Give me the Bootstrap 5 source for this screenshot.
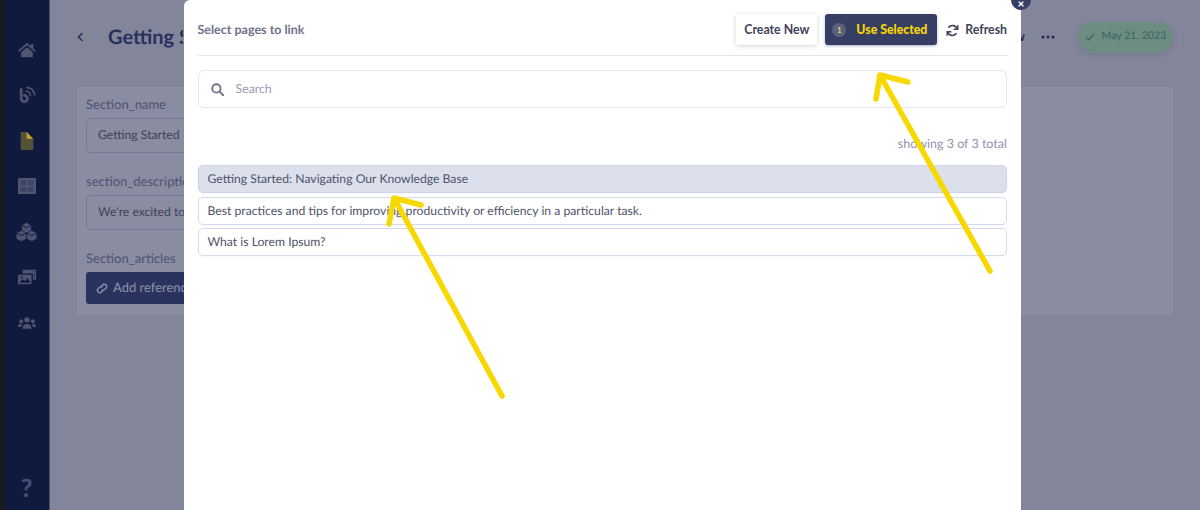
<!DOCTYPE html>
<html lang="en">
<head>
<meta charset="utf-8">
<title>Select pages to link</title>
<link href="https://cdn.jsdelivr.net/npm/bootstrap@5.3.0/dist/css/bootstrap.min.css" rel="stylesheet">
<style>
html,body{height:510px;overflow:hidden}
body{font-family:"Lato","Liberation Sans",sans-serif;background:#83869a;color:#3f4258;position:relative;text-rendering:geometricPrecision}
.app-shell{height:510px;border-left:4px solid #1b1b1b}
.side-rail{width:46px;background:#101a3e;padding-top:27px;border-right:1px solid #4a5274}
.rail-item{height:45.5px;width:100%}
.rail-item svg{width:18px;height:18px}
.rail-item svg.rail-cubes{width:21px;height:21px}
.rail-help{color:#454d70;font-weight:900;font-size:25px;line-height:1;margin-bottom:9px}
.page-area{min-width:0;padding:0 27px}
.page-top{height:87px;padding-bottom:13px}
.back-mark{color:#27305d;margin-right:24px}
.title-clip{width:75px;overflow:hidden}
.page-title{font-size:20px;font-weight:700;color:#27305d;margin:0;white-space:nowrap}
.tail-clip{width:7px;overflow:hidden;margin-left:auto;justify-content:flex-end}
.page-tail{font-size:13px;font-weight:700;color:#20264a;white-space:nowrap}
.date-pill{background:#6d8c82;color:#3f625f;border-radius:16px;height:31px;width:95px;font-size:10.6px;margin-left:23px;box-shadow:0 2px 5px rgba(60,70,100,.2)}
.form-panel{background:#8a8da2;height:228px;padding:9px;font-size:13px}
.form-clip{width:98px;overflow:hidden}
.field-label{color:#4c5273;margin-bottom:6px;line-height:16px;white-space:nowrap}
.field-box{height:35px;width:300px;border:1px solid #73779a;border-radius:5px;padding:0 11px;color:#3c4058;margin-bottom:20px;font-size:12.2px;white-space:nowrap}
.ref-btn{background:#2a3360;color:#8e93ab;height:32px;width:300px;border-radius:3px;padding-left:9px;font-size:13px;white-space:nowrap}
.dialog-sheet{position:absolute;left:184px;top:0;width:837px;height:510px;background:#fff;border-radius:6px 6px 0 0;padding:14px 14px 0 13.5px}
.close-dot{position:absolute;right:-10px;top:-10px;width:20px;height:20px;border-radius:50%;background:#373e63;color:#fff;font-size:12px;font-weight:900;line-height:1}
.dialog-title{font-size:12.5px;font-weight:700;color:#6f7289;padding-top:1px}
.dialog-head{height:42px;padding-bottom:10px;border-bottom:1px solid #e4e6ef}
.act-btn{height:31px;border-radius:3px;font-size:12.3px;font-weight:700;border:0;padding:1px 0 0}
.act-new{width:81px;background:#fff;color:#3f4258;box-shadow:0 1px 5px rgba(60,70,110,.22);margin-right:8px}
.act-use{width:112px;background:#373e63;color:#f7d800;box-shadow:0 1px 3px rgba(60,70,110,.4);font-weight:900;margin-right:9px;padding-left:7px}
.count-dot{width:14px;height:14px;border-radius:50%;background:#5a607f;color:#e4d65a;font-size:8px;margin-right:10px;font-weight:700}
.act-refresh{color:#3f4258;background:transparent}
.act-refresh svg{margin-right:6px}
.search-bar{height:38px;border:1.5px solid #e3e5f0;border-radius:6px;margin-top:14px;padding-left:12px;font-size:12.3px;color:#999caf}
.search-bar svg{margin-right:12px}
.count-line{font-size:12.5px;color:#8f93ab;text-align:right;margin-top:28px;margin-bottom:13px;line-height:16px}
.page-list{gap:3.5px}
.page-row{height:28px;border:1.5px solid #d5daf0;border-radius:5px;padding:1px 0 0 9px;font-size:12.2px;color:#50536a;box-shadow:0 1px 2px rgba(80,90,140,.05)}
.page-row.is-picked{background:#dce0ec;border-color:#ced4e8}
.arrow-layer{position:absolute;left:0;top:0;pointer-events:none}
</style>
</head>
<body>
<div class="app-shell d-flex">
  <nav class="side-rail d-flex flex-column align-items-center flex-shrink-0">
    <div class="rail-item d-flex align-items-center justify-content-center"><svg viewBox="0 0 20 20" fill="#4d5573"><path d="M10 2 0 10.800l1.300 1.400L10 4.800l8.700 7.400 1.300-1.400-3-2.600V3.500h-2.700v2.400z"/><path d="M3.500 12.500 10 7l6.500 5.500V18H3.500z"/></svg></div>
    <div class="rail-item d-flex align-items-center justify-content-center"><svg viewBox="0 0 20 20" fill="none" stroke="#4d5573"><path d="M3.500 3.500v10.500a3.500 3.500 0 1 0 3.500-3.500" stroke-width="3" stroke-linecap="round"/><path d="M8.500 5.500c3.200.3 5.200 2.300 5.500 5.500" stroke-width="1.800"/><path d="M9.500 1.500c5 .4 8.500 3.800 9 9" stroke-width="1.800"/></svg></div>
    <div class="rail-item d-flex align-items-center justify-content-center"><svg viewBox="0 0 20 20"><path d="M3 0h7l7 8v12H3z" fill="#55523a"/><path d="M9.500 0l7.500 7.500H9.500z" fill="#b9a52c"/></svg></div>
    <div class="rail-item d-flex align-items-center justify-content-center"><svg viewBox="0 0 20 20"><rect y="1" width="20" height="18" rx="1" fill="#4d5573"/><path d="M3 3.500h6v5H3zM11 3.500h6v5h-6zM3 11h6v5.500H3zM11 11h6v5.500h-6z" fill="#3d4463"/></svg></div>
    <div class="rail-item d-flex align-items-center justify-content-center"><svg class="rail-cubes" viewBox="0 0 20 20" fill="#4d5573" stroke="#101a3e" stroke-width=".5"><path d="M5.500 4 10 1.500 14.500 4v5.500L10 12 5.500 9.500z"/><path d="M.2 11.500 5 9l4.800 2.500v5.500L5 19.500.2 17z"/><path d="M10.200 11.500 15 9l4.800 2.500v5.500L15 19.500 10.200 17z"/><path d="M5.500 4 10 6.500 14.500 4M.2 11.500 5 14l4.800-2.500M10.200 11.500 15 14l4.800-2.500" fill="none" stroke-width=".9"/></svg></div>
    <div class="rail-item d-flex align-items-center justify-content-center"><svg viewBox="0 0 20 20" fill="#4d5573"><path d="M5 2h15v11h-3.500V6H5z"/><circle cx="18" cy="4" r=".8" fill="#101a3e"/><circle cx="18" cy="7" r=".8" fill="#101a3e"/><circle cx="18" cy="10" r=".8" fill="#101a3e"/><path d="M0 7.500h15V18H0z"/><path d="M1.500 16.500l3.500-4 2.500 2 3-3 3.500 5z" fill="#101a3e"/><circle cx="4" cy="10.300" r="1.200" fill="#101a3e"/></svg></div>
    <div class="rail-item d-flex align-items-center justify-content-center"><svg viewBox="0 0 20 20" fill="#4d5573"><circle cx="10" cy="6.500" r="3"/><circle cx="3.500" cy="8" r="2.200"/><circle cx="16.500" cy="8" r="2.200"/><path d="M5 16.500c0-3.500 1.500-5.500 5-5.500s5 2 5 5.500z"/><path d="M0 14.500c0-2.500 1-3.800 3.500-3.800.4 0 .7 0 1 .1-.5 1-.8 2.200-.8 3.700zM20 14.500c0-2.500-1-3.800-3.500-3.800-.4 0-.7 0-1 .1.500 1 .8 2.200.8 3.700z"/></svg></div>
    <div class="rail-help mt-auto">?</div>
  </nav>
  <main class="page-area flex-grow-1 d-flex flex-column">
    <header class="page-top d-flex align-items-center">
      <svg class="back-mark" width="7" height="10" viewBox="0 0 7 10" fill="none" stroke="currentColor" stroke-width="1.600"><path d="M5.500 1 1.500 5l4 4"/></svg>
      <div class="title-clip"><h1 class="page-title">Getting Started</h1></div>
      <div class="tail-clip d-flex"><span class="page-tail">Preview</span></div>
      <svg class="ms-3" width="14" height="4" viewBox="0 0 14 4" fill="#20264a"><circle cx="2" cy="2" r="1.500"/><circle cx="7" cy="2" r="1.500"/><circle cx="12" cy="2" r="1.500"/></svg>
      <span class="date-pill d-inline-flex align-items-center justify-content-center gap-1"><svg width="10" height="8" viewBox="0 0 10 8" fill="none" stroke="currentColor" stroke-width="1.200"><path d="M1 4.200 3.600 7 9 1"/></svg>&nbsp;May 21, 2023</span>
    </header>
    <section class="form-panel">
      <div class="form-clip">
        <div class="field-label">Section_name</div>
        <div class="field-box d-flex align-items-center">Getting Started</div>
        <div class="field-label">section_description</div>
        <div class="field-box d-flex align-items-center">We're excited to</div>
        <div class="field-label">Section_articles</div>
        <div class="ref-btn d-flex align-items-center gap-1">
          <svg width="14" height="13" viewBox="0 0 16 16" fill="none" stroke="currentColor" stroke-width="1.700"><path d="M7 5.500 9.500 3a3 3 0 0 1 4 4l-2.500 2.500a3 3 0 0 1-3.500 0M9 10.500 6.500 13a3 3 0 0 1-4-4L5 6.500a3 3 0 0 1 3.500 0"/></svg>
          Add reference
        </div>
      </div>
    </section>
  </main>
</div>

<div class="dialog-sheet" role="dialog" aria-label="Select pages to link">
  <div class="close-dot d-flex align-items-end justify-content-center"><span>×</span></div>
  <div class="dialog-head d-flex align-items-center">
    <span class="dialog-title">Select pages to link</span>
    <button class="act-btn act-new ms-auto" type="button">Create New</button>
    <button class="act-btn act-use d-inline-flex align-items-center" type="button"><span class="count-dot d-inline-flex align-items-center justify-content-center">1</span>Use Selected</button>
    <button class="act-btn act-refresh d-inline-flex align-items-center" type="button">
      <svg width="13" height="13" viewBox="0 0 16 16" fill="none" stroke="#3f4258" stroke-width="2"><path d="M14 6.500A6.200 6.200 0 0 0 3 4.500M2 9.500a6.200 6.200 0 0 0 11 2"/><path d="M14.500 1.500v5h-5M1.500 14.500v-5h5" stroke-width="1.800"/></svg>Refresh
    </button>
  </div>
  <div class="search-bar d-flex align-items-center">
    <svg width="13" height="13" viewBox="0 0 14 14" fill="none" stroke="#6f7289" stroke-width="2"><circle cx="5.800" cy="5.800" r="4.500"/><path d="m9.200 9.200 4 4" stroke-linecap="round"/></svg>
    Search
  </div>
  <div class="count-line">showing 3 of 3 total</div>
  <div class="page-list d-flex flex-column">
    <div class="page-row is-picked d-flex align-items-center">Getting Started: Navigating Our Knowledge Base</div>
    <div class="page-row d-flex align-items-center">Best practices and tips for improving productivity or efficiency in a particular task.</div>
    <div class="page-row d-flex align-items-center">What is Lorem Ipsum?</div>
  </div>
</div>

<svg class="arrow-layer" width="1200" height="510" viewBox="0 0 1200 510" fill="none" stroke="#f7d800" stroke-width="5.500" stroke-linecap="round" stroke-linejoin="round" aria-hidden="true">
  <path d="M990 271 880 75M876 99l4-24 28 7"/>
  <path d="M502 396 394 198M389 224l5-26 27 7"/>
</svg>
<script src="https://cdn.jsdelivr.net/npm/bootstrap@5.3.0/dist/js/bootstrap.bundle.min.js"></script>
</body>
</html>
